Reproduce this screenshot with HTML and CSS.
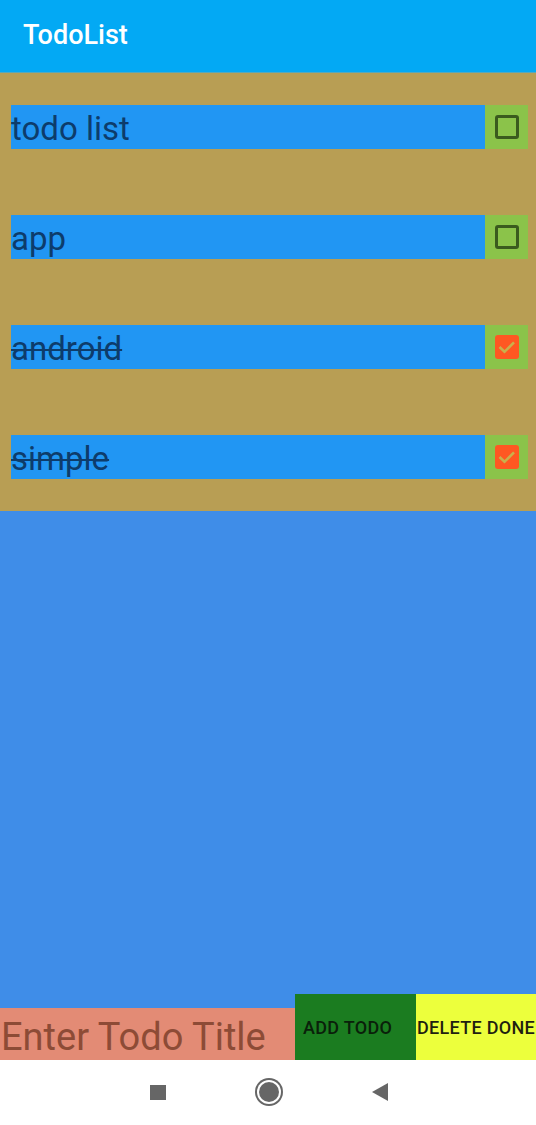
FILE: index.html
```html
<!DOCTYPE html>
<html>
<head>
<meta charset="utf-8">
<link rel="stylesheet" href="styles.css">
</head>
<body>
<div class="app">
  <header class="toolbar">TodoList</header>
  <section class="list">
    <div class="row">
      <div class="title">todo list</div>
      <div class="check"><span class="box"></span></div>
    </div>
    <div class="row">
      <div class="title">app</div>
      <div class="check"><span class="box"></span></div>
    </div>
    <div class="row">
      <div class="title done">android</div>
      <div class="check"><span class="box checked"><svg viewBox="0 0 24 24" width="24" height="24"><path d="M4.5 12l5 4.8 9.5-9.5" fill="none" stroke="#c9b04c" stroke-width="2.6"/></svg></span></div>
    </div>
    <div class="row">
      <div class="title done">simple</div>
      <div class="check"><span class="box checked"><svg viewBox="0 0 24 24" width="24" height="24"><path d="M4.5 12l5 4.8 9.5-9.5" fill="none" stroke="#c9b04c" stroke-width="2.6"/></svg></span></div>
    </div>
  </section>
  <div class="spacer"></div>
  <div class="bottom">
    <div class="input">Enter Todo Title</div>
    <div class="btn add">ADD TODO</div>
    <div class="btn del">DELETE DONE</div>
  </div>
  <nav class="navbar">
    <span class="nav-square"></span>
    <span class="nav-circle"></span>
    <span class="nav-back"></span>
  </nav>
</div>
</body>
</html>
```

FILE: styles.css
```css
html, body {
  margin: 0;
  padding: 0;
}
body {
  font-family: Roboto, "Noto Sans", sans-serif;
}
.app {
  width: 536px;
  height: 1125px;
  display: flex;
  flex-direction: column;
  overflow: hidden;
  background: #3f8de8;
}
.toolbar {
  height: 73px;
  flex: none;
  background: #03a9f4;
  color: #fff;
  font-size: 27px;
  font-weight: 500;
  display: flex;
  align-items: center;
  padding-left: 23px;
  padding-bottom: 2px;
  box-sizing: border-box;
  border-bottom: 1px solid #5aa8b8;
}
.list {
  background: #b89e54;
  padding: 32px 8px 32px 11px;
  display: flex;
  flex-direction: column;
  gap: 66px;
  flex: none;
}
.row {
  display: flex;
  height: 44px;
}
.title {
  flex: 1;
  background: #2196f3;
  color: #0d3c6b;
  font-size: 33px;
  line-height: 48px;
  height: 44px;
  white-space: nowrap;
}
.title.done {
  text-decoration: line-through;
  text-decoration-thickness: 2px;
}
.check {
  width: 43px;
  background: #8bc34a;
  display: flex;
  align-items: center;
  justify-content: center;
}
.box {
  width: 24px;
  height: 24px;
  box-sizing: border-box;
  border: 3px solid #3a5a1e;
  border-radius: 3px;
  display: flex;
}
.box.checked {
  border: none;
  background: #ff5722;
}
.spacer {
  flex: 1;
}
.bottom {
  display: flex;
  align-items: flex-end;
  height: 66px;
  flex: none;
}
.input {
  width: 295px;
  height: 52px;
  background: #e38b75;
  color: #8d4b36;
  font-size: 38px;
  line-height: 58px;
  padding-left: 1px;
  box-sizing: border-box;
  white-space: nowrap;
  overflow: hidden;
}
.btn {
  height: 66px;
  display: flex;
  align-items: center;
  font-size: 18px;
  font-weight: 500;
  letter-spacing: 0.3px;
  white-space: nowrap;
  overflow: hidden;
  box-sizing: border-box;
}
.add {
  width: 121px;
  background: #1b7c20;
  color: #0a200a;
  padding-left: 8px;
}
.del {
  width: 120px;
  background: #ecff3c;
  color: #1f1f10;
  padding-left: 1px;
}
.navbar {
  height: 65px;
  flex: none;
  background: #fff;
  position: relative;
}
.nav-square {
  position: absolute;
  left: 150px;
  top: 25px;
  width: 16px;
  height: 15px;
  background: #666;
}
.nav-circle {
  position: absolute;
  left: 259px;
  top: 22px;
  width: 20px;
  height: 20px;
  border-radius: 50%;
  background: #666;
  box-shadow: 0 0 0 2px #fff, 0 0 0 4px #666;
}
.nav-back {
  position: absolute;
  left: 372px;
  top: 23px;
  width: 0;
  height: 0;
  border-top: 9px solid transparent;
  border-bottom: 9px solid transparent;
  border-right: 16px solid #666;
}
```
